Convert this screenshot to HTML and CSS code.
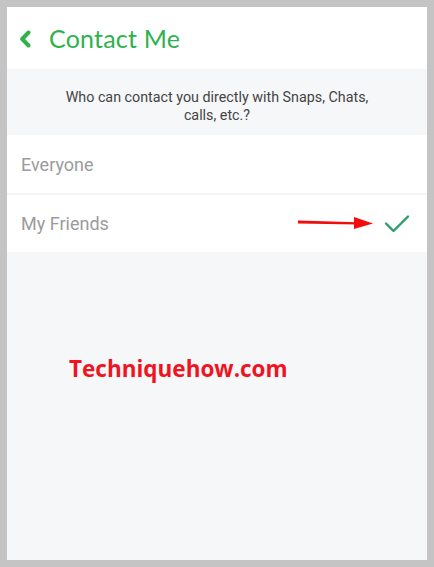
FILE: index.html
```html
<!DOCTYPE html>
<html lang="en">

<head>
    <meta charset="UTF-8">
    <meta name="viewport" content="width=device-width, initial-scale=1.0">
    <title>Contact Me</title>
    <link rel="stylesheet" href="styles.css">
</head>

<body>
    <div class="screen">
        <!-- header -->
        <div class="header">
            <svg class="back" width="12" height="18" viewBox="0 0 12 18">
                <path d="M9.5 2.5 L3.2 9 L9.5 15.5" fill="none" stroke="#2eb24c" stroke-width="4" stroke-linecap="round" stroke-linejoin="round"/>
            </svg>
            <span class="title">Contact Me</span>
        </div>

        <div class="desc">Who can contact you directly with Snaps, Chats,<br>calls, etc.?</div>

        <div class="list">
            <div class="row">Everyone</div>
            <div class="row">
                <span>My Friends</span>
                <svg class="check" width="26" height="20" viewBox="0 0 26 20">
                    <path d="M2 9.5 L9.5 17 L24 2.5" fill="none" stroke="#2c9e69" stroke-width="2.4" stroke-linecap="round" stroke-linejoin="round"/>
                </svg>
            </div>
        </div>

        <!-- annotation -->
        <svg class="arrow" width="80" height="16" viewBox="0 0 80 16">
            <path d="M1 4.5 L60 6.2 L60 8.4 L1 7.6 Z" fill="#f20d0d"/>
            <path d="M57 1 L76 7.5 L57 13 Z" fill="#f20d0d"/>
        </svg>
        <div class="mark">Techniquehow.com</div>
    </div>
</body>

</html>
```

FILE: styles.css
```css
body {
    margin: 0;
    background-color: #c4c4c4;
}

.screen {
    position: relative;
    margin: 7px;
    height: 553px;
    background-color: #f6f7f9;
    overflow: hidden;
}

.header {
    height: 62px;
    background-color: #fff;
    display: flex;
    align-items: center;
    padding-left: 12px;
}

.back {
    margin-top: 1px;
}

.title {
    margin-left: 18px;
    font-family: Lato, "Open Sans", sans-serif;
    font-size: 25px;
    color: #2eb24c;
    letter-spacing: 0.2px;
}

.desc {
    height: 66px;
    box-sizing: border-box;
    padding-top: 19px;
    text-align: center;
    font-family: Roboto, "Noto Sans", sans-serif;
    font-size: 14.3px;
    line-height: 18px;
    color: #444;
}

.row {
    height: 58px;
    background-color: #fff;
    display: flex;
    align-items: center;
    justify-content: space-between;
    padding: 0 17px 0 14px;
    font-family: Roboto, "Noto Sans", sans-serif;
    font-size: 18px;
    color: #9b9b9b;
}

.row + .row {
    border-top: 2px solid #f3f4f6;
    height: 57px;
}

.arrow {
    position: absolute;
    left: 290px;
    top: 209px;
}

.mark {
    position: absolute;
    left: 62px;
    top: 346px;
    font-family: "Open Sans", sans-serif;
    font-weight: 700;
    font-size: 22.5px;
    color: #f0141e;
}
```
